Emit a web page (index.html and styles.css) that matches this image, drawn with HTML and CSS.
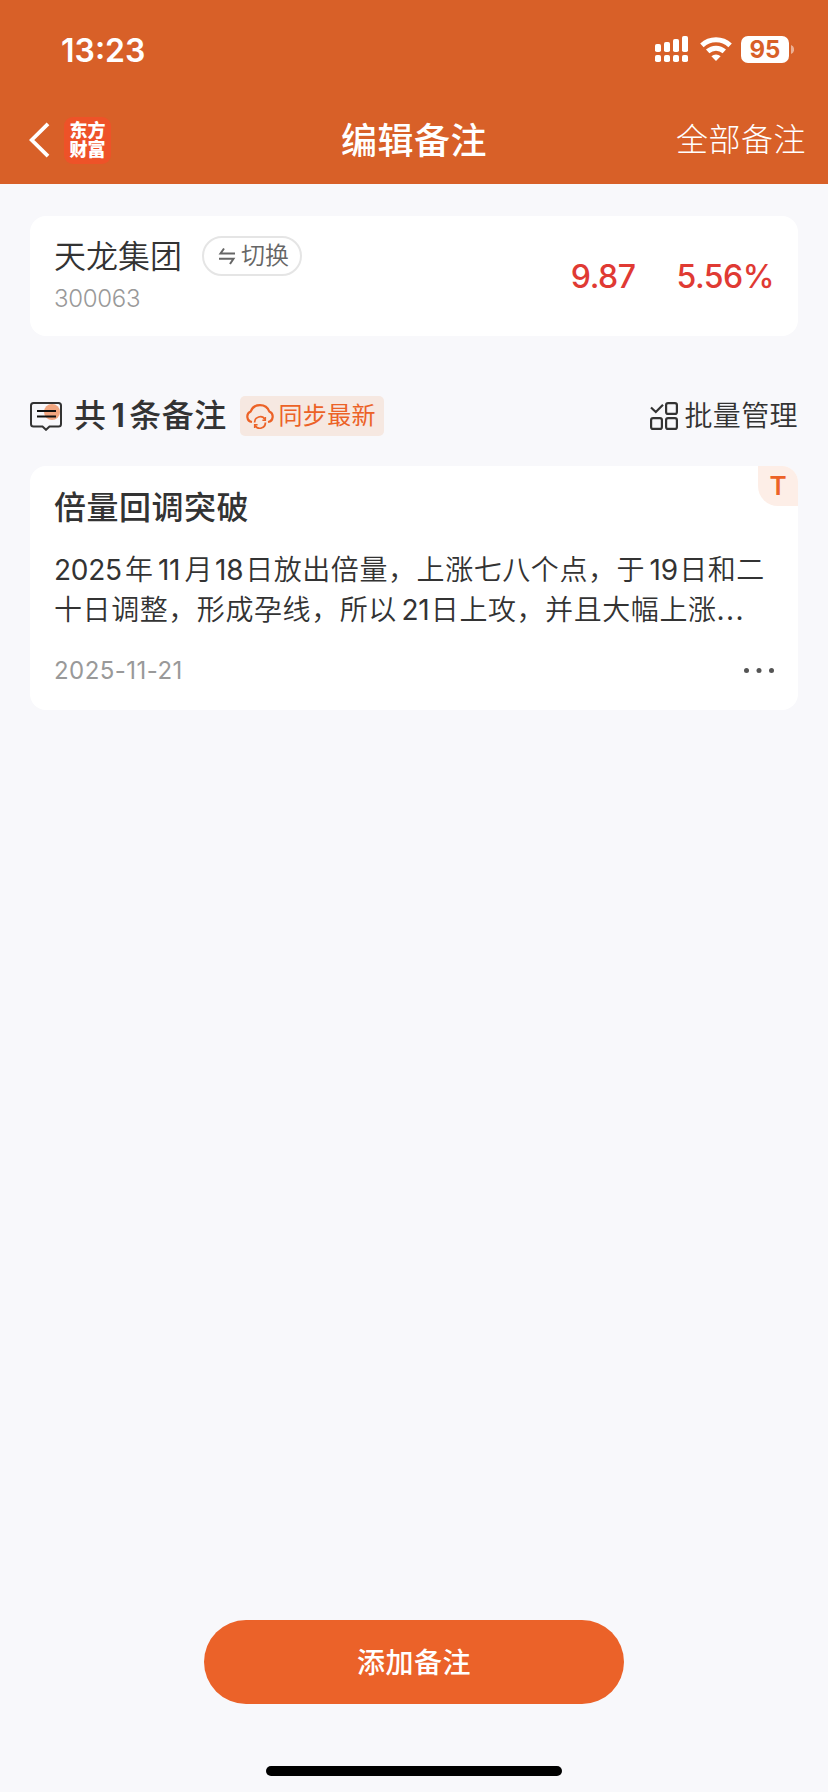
FILE: index.html
```html
<!DOCTYPE html>
<html lang="zh-CN">
<head>
    <meta charset="UTF-8">
    <title>编辑备注</title>
    <link rel="stylesheet" href="styles.css">
</head>
<body>
    <header class="header">
        <div class="status-bar">
            <span class="time">13:23</span>
            <div class="status-icons">
                <svg class="signal" width="33" height="26" viewBox="0 0 33 26" fill="#fff">
                    <rect x="0" y="8" width="6" height="8" rx="1.8"/>
                    <rect x="9" y="6" width="6" height="10" rx="1.8"/>
                    <rect x="18" y="3" width="6" height="13" rx="1.8"/>
                    <rect x="27" y="0" width="6" height="16" rx="1.8"/>
                    <rect x="0" y="19" width="6" height="7" rx="1.8"/>
                    <rect x="9" y="19" width="6" height="7" rx="1.8"/>
                    <rect x="18" y="19" width="6" height="7" rx="1.8"/>
                    <rect x="27" y="19" width="6" height="7" rx="1.8"/>
                </svg>
                <svg class="wifi" width="32" height="24" viewBox="0 0 32 24" fill="none" stroke="#fff" stroke-width="5">
                    <path d="M1.9 8.4a20.5 20.5 0 0 1 28.2 0"/>
                    <path d="M7.7 14.4a12.2 12.2 0 0 1 16.6 0"/>
                    <path d="M11.4 19.2a6.8 6.8 0 0 1 9.2 0L16 24z" fill="#fff" stroke="none"/>
                </svg>
                <div class="battery">95</div>
                <svg class="battery-cap" width="3" height="9" viewBox="0 0 3 9"><path d="M0 0a4.8 4.8 0 0 1 0 9z" fill="#fff" opacity=".5"/></svg>
            </div>
        </div>
        <nav class="navbar">
            <div class="navbar-left">
                <svg width="21" height="36" viewBox="0 0 21 36" fill="none" stroke="#fff" stroke-width="3.8"><path d="M19 1.8 2.7 18 19 34.2"/></svg>
                <div class="logo"><span>东方</span><span>财富</span></div>
            </div>
            <h1 class="navbar-title">编辑备注</h1>
            <a class="navbar-link">全部备注</a>
        </nav>
    </header>

    <main class="content">
        <section class="card stock">
            <div class="stock-info">
                <div class="stock-row">
                    <span class="stock-name">天龙集团</span>
                    <button class="switch-btn">
                        <svg width="18" height="18" viewBox="0 0 18 18" fill="none" stroke="#666" stroke-width="2"><path d="M17 6.5H2.5L6 1.5M1 11.7h14.5L12 17"/></svg>
                        <span>切换</span>
                    </button>
                </div>
                <div class="stock-code">300063</div>
            </div>
            <div class="stock-price">
                <span>9.87</span>
                <span>5.56%</span>
            </div>
        </section>

        <div class="toolbar">
            <svg width="32" height="29" viewBox="0 0 32 29" fill="none">
                <circle cx="22" cy="10" r="8" fill="#f2a680"/>
                <path d="M3.5 1H28.5Q31 1 31 3.5V22Q31 24.5 28.5 24.5H19.5L16 27.8L12.5 24.5H3.5Q1 24.5 1 22V3.5Q1 1 3.5 1z" stroke="#333" stroke-width="2"/>
                <path d="M7 9h19M7 14.5h19" stroke="#111" stroke-width="2"/>
            </svg>
            <h2 class="toolbar-title">共<span class="count">1</span>条备注</h2>
            <button class="sync-btn">
                <svg width="28" height="25" viewBox="0 0 28 25" fill="none" stroke="#ec6227" stroke-width="2.2">
                    <path d="M6 18A5.5 5.5 0 0 1 4.7 7.5Q7 1.1 14 1.1t9.3 6.400A5.5 5.5 0 0 1 22 18"/>
                    <path d="M8.6 18.500a5.600 5.600 0 0 1 10.400-3M19.400 18.500a5.600 5.600 0 0 1-10.400 3" stroke-width="1.8"/>
                    <path d="M19.4 13v3.200h-3M8.6 24v-3.200h3" stroke-width="1.4"/>
                </svg>
                <span>同步最新</span>
            </button>
            <a class="manage">
                <svg width="28" height="28" viewBox="0 0 28 28" fill="none" stroke="#333" stroke-width="2.2">
                    <path d="M1 5.5 5.8 10 13 2.8"/>
                    <rect x="16.1" y="1.1" width="10.8" height="10.8" rx="2"/>
                    <rect x="1.1" y="16.1" width="10.8" height="10.8" rx="2"/>
                    <rect x="16.1" y="16.1" width="10.8" height="10.8" rx="2"/>
                </svg>
                <span>批量管理</span>
            </a>
        </div>

        <article class="card note">
            <span class="note-tag">T</span>
            <h3 class="note-title">倍量回调突破</h3>
            <p class="note-text">
                <span class="line"><i class="num year">2025</i>年<i class="num month">11</i>月<i class="num">18</i>日放出倍量，上涨七八个点，于<i class="num spaced">19</i>日和二</span>
                <span class="line">十日调整，形成孕线，所以<i class="num spaced">21</i>日上攻，并且大幅上涨<i class="dots">...</i></span>
            </p>
            <div class="note-footer">
                <time class="note-date">2025-11-21</time>
                <svg width="30" height="5" viewBox="0 0 30 5" fill="#555"><circle cx="2.5" cy="2.5" r="2.5"/><circle cx="15" cy="2.5" r="2.5"/><circle cx="27.5" cy="2.5" r="2.5"/></svg>
            </div>
        </article>
    </main>

    <footer class="footer">
        <button class="add-btn">添加备注</button>
        <div class="home-indicator"></div>
    </footer>
</body>
</html>
```

FILE: styles.css
```css
/* General Styles */
* {
    box-sizing: border-box;
}
body {
    margin: 0;
    height: 1792px;
    display: flex;
    flex-direction: column;
    background-color: #f8f8fb;
    color: #333;
    font-family: 'Inter', 'Noto Sans CJK SC', sans-serif;
}
h1, h2, h3, p {
    margin: 0;
}
button {
    font-family: inherit;
    padding: 0;
}
svg {
    display: block;
    flex: none;
}
i {
    font-style: normal;
}

/* Header */
.header {
    height: 184px;
    background-color: #d86028;
    color: #fff;
}
.status-bar {
    height: 98px;
    padding: 0 34px 0 61px;
    display: flex;
    justify-content: space-between;
    align-items: center;
}
.time {
    padding-top: 3px;
    font-size: 32px;
    font-weight: 600;
    line-height: 40px;
}
.status-icons {
    display: flex;
    align-items: center;
}
.wifi {
    margin: 0 9px 0 12px;
}
.battery {
    width: 48px;
    height: 27px;
    border-radius: 7px;
    background-color: #fff;
    color: #d86028;
    font-size: 24px;
    font-weight: 700;
    line-height: 27px;
    text-align: center;
}
.battery-cap {
    margin-left: 2px;
}
.navbar {
    height: 84px;
    padding: 0 22px 0 29px;
    display: grid;
    grid-template-columns: 1fr auto 1fr;
    align-items: center;
}
.navbar-left {
    display: flex;
    align-items: center;
    gap: 14px;
}
.logo {
    width: 47px;
    height: 47px;
    border-radius: 9px;
    background-color: #ee5228;
    font-size: 18px;
    font-weight: 900;
    line-height: 19px;
    display: flex;
    flex-direction: column;
    align-items: center;
    justify-content: center;
}
.navbar-title {
    margin: 2px 7px 0 0;
    font-size: 36px;
    font-weight: 500;
    line-height: 48px;
    letter-spacing: 0.5px;
}
.navbar-link {
    justify-self: end;
    font-size: 32px;
    font-weight: 300;
    line-height: 48px;
    letter-spacing: 0.5px;
}

/* Cards */
.content {
    flex: 1;
    padding: 32px 30px 0;
}
.card {
    background-color: #fff;
    border-radius: 16px;
}
.stock {
    height: 120px;
    padding: 20px 25px 0 24px;
    display: flex;
    justify-content: space-between;
}
.stock-row {
    display: flex;
    align-items: center;
    gap: 20px;
    height: 40px;
}
.stock-name {
    padding-top: 2px;
    font-size: 32px;
    font-weight: 350;
    line-height: 40px;
}
.switch-btn {
    width: 100px;
    height: 40px;
    padding-left: 3px;
    border: 2px solid #e5e5e5;
    border-radius: 20px;
    background: none;
    color: #666;
    font-size: 24px;
    font-weight: 350;
    line-height: 36px;
    display: flex;
    align-items: center;
    justify-content: center;
    gap: 5px;
}
.stock-code {
    margin-top: 8px;
    color: #999;
    font-size: 24px;
    font-weight: 350;
    line-height: 30px;
    letter-spacing: -0.3px;
}
.stock-price {
    display: flex;
    gap: 41px;
    color: #e03a33;
    font-size: 32px;
    font-weight: 550;
    line-height: 82px;
    letter-spacing: -0.5px;
}
.stock-price span:last-child {
    margin-right: -1px;
}

/* Toolbar */
.toolbar {
    height: 40px;
    margin: 60px 0 30px;
    display: flex;
    align-items: center;
}
.toolbar-title {
    margin-left: 12px;
    font-size: 32px;
    font-weight: 500;
    line-height: 40px;
    letter-spacing: 0.4px;
}
.count {
    margin: 0 4px 0 5px;
    font-weight: 600;
}
.sync-btn {
    width: 144px;
    height: 40px;
    margin-left: 13px;
    padding-left: 6px;
    border: none;
    border-radius: 5px;
    background-color: #f6e8e1;
    color: #ec6227;
    font-size: 24px;
    line-height: 40px;
    letter-spacing: 0.3px;
    display: flex;
    align-items: center;
    gap: 5px;
}
.manage {
    margin-left: auto;
    display: flex;
    align-items: center;
    gap: 6px;
    font-size: 28px;
    font-weight: 350;
    line-height: 40px;
    letter-spacing: 0.4px;
}

/* Note */
.note {
    position: relative;
    height: 244px;
    padding: 22px 24px 0;
}
.note-tag {
    position: absolute;
    top: 0;
    right: 0;
    width: 40px;
    height: 40px;
    border-radius: 0 16px 0 20px;
    background-color: #fdeee7;
    color: #ec6227;
    font-size: 26px;
    font-weight: 600;
    line-height: 40px;
    text-align: center;
}
.note-title {
    font-size: 32px;
    font-weight: 500;
    line-height: 40px;
    letter-spacing: 0.5px;
}
.note-text {
    margin-top: 22px;
    font-size: 28px;
    font-weight: 350;
    line-height: 40px;
    letter-spacing: 0.57px;
}
.line {
    display: block;
    white-space: nowrap;
}
/* digit groups inside the running text */
.num {
    display: inline-block;
    width: 32px;
    font-weight: 400;
    letter-spacing: -0.3px;
    text-align: center;
}
.year {
    width: 71px;
    text-align: left;
}
.month {
    width: 31px;
}
.spaced {
    width: 34px;
    padding-left: 3px;
}
.dots {
    font-weight: 400;
    letter-spacing: 1.4px;
}
.note-footer {
    height: 30px;
    margin-top: 26px;
    display: flex;
    align-items: center;
    justify-content: space-between;
}
.note-footer svg {
    margin-bottom: 2px;
}
.note-date {
    color: #999;
    font-size: 24px;
    line-height: 30px;
    letter-spacing: 0.45px;
}

/* Bottom */
.footer {
    display: flex;
    flex-direction: column;
    align-items: center;
    padding-bottom: 16px;
}
.add-btn {
    width: 420px;
    height: 84px;
    padding-bottom: 2px;
    border: none;
    border-radius: 42px;
    background-color: #eb6229;
    color: #fff;
    font-size: 28px;
    font-weight: 500;
    letter-spacing: 0.5px;
}
.home-indicator {
    width: 296px;
    height: 10px;
    margin-top: 62px;
    border-radius: 5px;
    background-color: #000;
}
```
